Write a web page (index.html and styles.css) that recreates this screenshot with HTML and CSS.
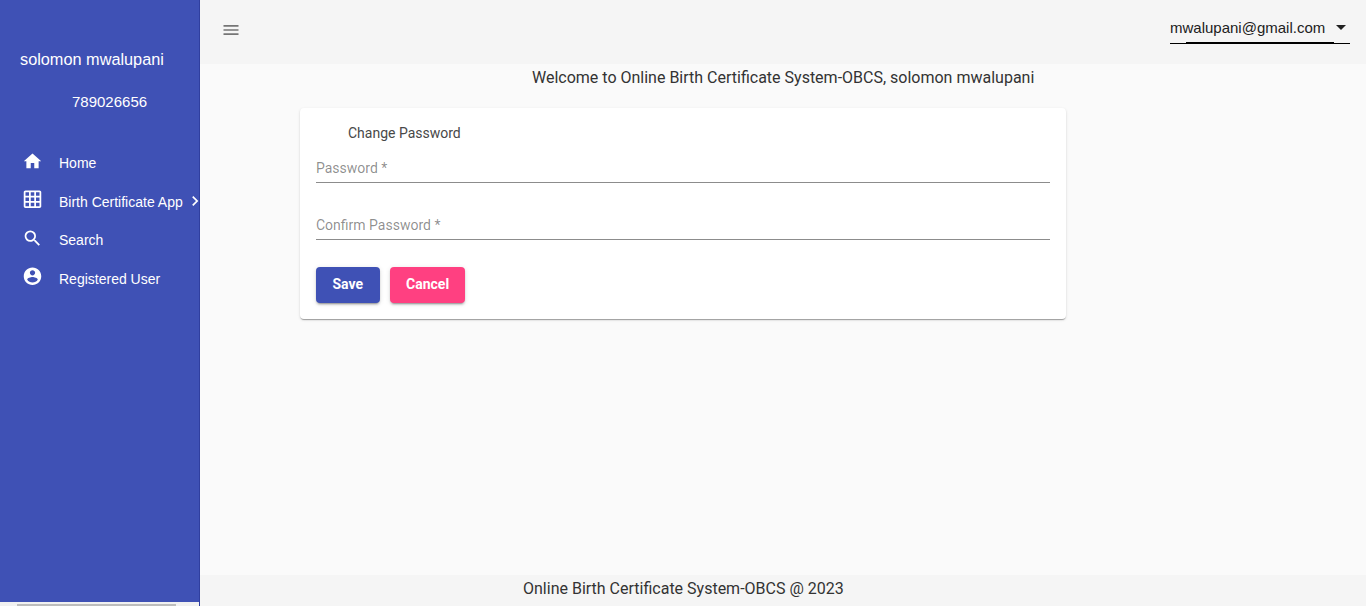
FILE: index.html
```html
<!DOCTYPE html>
<html lang="en">
<head>
<meta charset="utf-8">
<title>OBCS</title>
<link rel="stylesheet" href="styles.css">
</head>
<body>
<div class="app">
  <aside class="sidebar">
    <div class="side-main">
      <div class="user-name">solomon mwalupani</div>
      <div class="user-phone">789026656</div>
      <nav class="menu">
        <a class="menu-item">
          <svg class="menu-icon" viewBox="0 0 24 24"><path d="M10 20v-6h4v6h5v-8h3L12 3 2 12h3v8z"/></svg>
          <span>Home</span>
        </a>
        <a class="menu-item">
          <svg class="menu-icon" viewBox="0 0 24 24"><path d="M20 2H4c-1.100 0-2 .9-2 2v16c0 1.100.9 2 2 2h16c1.100 0 2-.9 2-2V4c0-1.100-.9-2-2-2zM8 20H4v-4h4v4zm0-6H4v-4h4v4zm0-6H4V4h4v4zm6 12h-4v-4h4v4zm0-6h-4v-4h4v4zm0-6h-4V4h4v4zm6 12h-4v-4h4v4zm0-6h-4v-4h4v4zm0-6h-4V4h4v4z"/></svg>
          <span>Birth Certificate App</span>
          <svg class="chevron" viewBox="0 0 24 24"><path d="M10 6 8.590 7.410 13.170 12l-4.580 4.590L10 18l6-6z"/></svg>
        </a>
        <a class="menu-item">
          <svg class="menu-icon" viewBox="0 0 24 24"><path d="M15.500 14h-.79l-.28-.27A6.471 6.471 0 0 0 16 9.500 6.500 6.500 0 1 0 9.500 16c1.610 0 3.090-.59 4.230-1.570l.27.28v.79l5 4.990L20.490 19l-4.990-5zm-6 0C7.010 14 5 11.990 5 9.500S7.010 5 9.500 5 14 7.010 14 9.500 11.990 14 9.500 14z"/></svg>
          <span>Search</span>
        </a>
        <a class="menu-item">
          <svg class="menu-icon" viewBox="0 0 24 24"><path d="M12 2C6.480 2 2 6.480 2 12s4.480 10 10 10 10-4.480 10-10S17.520 2 12 2zm0 3c1.660 0 3 1.340 3 3s-1.340 3-3 3-3-1.340-3-3 1.340-3 3-3zm0 14.200c-2.500 0-4.710-1.280-6-3.220.03-1.990 4-3.080 6-3.080 1.990 0 5.970 1.090 6 3.080-1.290 1.940-3.500 3.220-6 3.220z"/></svg>
          <span>Registered User</span>
        </a>
      </nav>
    </div>
    <div class="side-scroll"><div class="side-thumb"></div></div>
  </aside>
  <div class="main">
    <header class="toolbar">
      <button class="menu-toggle" type="button" aria-label="Menu">
        <svg viewBox="0 0 24 24"><path d="M3 18h18v-2H3v2zm0-5h18v-2H3v2zm0-7v2h18V6H3z"/></svg>
      </button>
      <div class="account">
        <span class="account-mail">mwalupani@gmail.com</span>
        <span class="account-arrow"></span>
        <span class="account-ink"></span>
      </div>
    </header>
    <main class="content">
      <p class="welcome">Welcome to Online Birth Certificate System-OBCS, solomon mwalupani</p>
      <section class="card">
        <h2 class="card-title">Change Password</h2>
        <div class="field"><span class="field-label">Password *</span></div>
        <div class="field"><span class="field-label">Confirm Password *</span></div>
        <div class="actions">
          <button class="btn btn-save" type="button">Save</button>
          <button class="btn btn-cancel" type="button">Cancel</button>
        </div>
      </section>
    </main>
    <footer class="footer">Online Birth Certificate System-OBCS @ 2023</footer>
  </div>
</div>
</body>
</html>
```
FILE: styles.css
```css
* { box-sizing: border-box; }
html, body { margin: 0; height: 100%; overflow: hidden; }
body { font-family: Roboto, "Liberation Sans", sans-serif; color: rgba(0,0,0,.87); }
.app { display: flex; height: 606px; }

.sidebar { width: 200px; flex: none; display: flex; flex-direction: column; border-right: 1px solid #303f9f; background: #f1f1f1; }
.side-main { flex: 1; background: #3f51b5; color: #fff; padding-top: 50px; font-family: "Liberation Sans", Arial, sans-serif; }
.user-name { font-size: 16.300px; line-height: 19px; padding-left: 20px; }
.user-phone { font-size: 15px; line-height: 18px; padding-left: 72px; margin-top: 24px; }
.menu { display: flex; flex-direction: column; margin-top: 33px; }
.menu-item { display: flex; align-items: center; height: 38.500px; padding-left: 21.500px; font-size: 14px; color: #fff; position: relative; }
.menu-icon { width: 21px; height: 21px; fill: #fff; margin-right: 16.500px; flex: none; transform: translateY(-2.200px); }
.chevron { width: 20px; height: 20px; fill: #fff; position: absolute; left: 185px; top: 8.700px; }
.side-scroll { height: 4px; flex: none; padding: 2px 0 0 17px; }
.side-thumb { width: 159px; height: 2px; background: #bdbdbd; }

.main { flex: 1; min-width: 0; display: flex; flex-direction: column; background: #fafafa; }
.toolbar { height: 64px; flex: none; background: #f5f5f5; display: flex; align-items: flex-start; justify-content: space-between; padding: 0 16px 0 21px; }
.menu-toggle { width: 20px; height: 20px; padding: 0; border: 0; margin-top: 20px; background: none; display: flex; }
.menu-toggle svg { width: 20px; height: 20px; fill: #757575; }
.account { width: 180px; height: 30px; margin-top: 14px; border-bottom: 1px solid #000; position: relative; display: flex; align-items: center; justify-content: space-between; padding: 0 4px 2px 0; font-family: "Liberation Sans", Arial, sans-serif; font-size: 15px; color: #212121; }
.account-mail { line-height: 26px; }
.account-arrow { width: 0; height: 0; border: 5px solid transparent; border-top-color: #212121; border-bottom: 0; }
.account-ink { position: absolute; left: 16px; bottom: -1px; width: 148px; height: 2px; background: #000; }

.content { flex: 1; min-height: 0; }
.welcome { margin: 0; height: 44px; padding: 4px 0 0 332px; font-size: 16px; line-height: 19px; color: #333; }
.card { width: 766px; height: 211px; margin-left: 100px; background: #fff; border-radius: 4px; padding: 17px 16px 16px; box-shadow: 0 2px 1px -1px rgba(0,0,0,.2), 0 1px 1px 0 rgba(0,0,0,.14), 0 1px 3px 0 rgba(0,0,0,.12); }
.card-title { margin: 0 0 0 32px; font-size: 14px; font-weight: 400; line-height: 17px; color: #484848; }
.field { height: 33px; margin-top: 8px; padding-top: 4px; border-bottom: 1px solid #8c8c8c; display: flex; align-items: center; }
.field + .field { margin-top: 24px; }
.field-label { font-size: 14px; line-height: 17px; color: rgba(0,0,0,.45); }
.actions { display: flex; gap: 10px; margin-top: 27px; }
.btn { height: 36px; border: 0; border-radius: 4px; padding: 0 16px 2px; font: 700 14px Roboto, sans-serif; color: #fff; box-shadow: 0 3px 1px -2px rgba(0,0,0,.2), 0 2px 2px 0 rgba(0,0,0,.14), 0 1px 5px 0 rgba(0,0,0,.12); }
.btn-save { background: #3f51b5; padding: 0 16.500px 2px; }
.btn-cancel { background: #ff4081; padding: 0 15.500px 2px 16.500px; }

.footer { height: 31px; flex: none; background: #f5f5f5; padding-left: 323px; font-size: 16px; line-height: 28px; color: #333; }
```
